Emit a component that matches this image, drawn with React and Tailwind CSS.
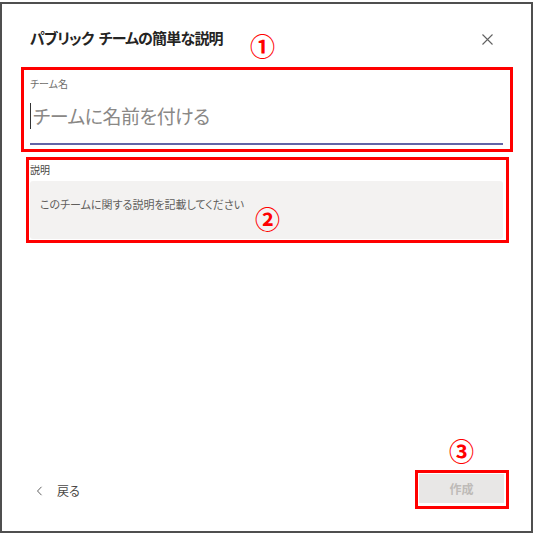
import React from 'react';

const jp = "font-['Noto_Sans_CJK_JP','Noto_Sans',sans-serif] [font-feature-settings:'palt']";

const Marker = ({ n, className }) => (
  <span
    className={`absolute text-[25px] leading-none font-bold text-[#ff0000] font-['Noto_Sans_CJK_JP',sans-serif] ${className}`}
  >
    {n}
  </span>
);

const App = () => {
  return (
    <div className={`relative w-[533px] h-[533px] bg-white pt-[2px] ${jp}`}>
      <div className="w-full h-[531px] border-2 border-[#4f4f4f] flex flex-col">
        {/* header */}
        <div className="flex justify-between items-center pl-[28px] pr-[38px] pt-[22px]">
          <h1 className="text-[15px] leading-[24px] font-bold tracking-[-0.8px] text-[#252423]">
            <span className="mr-[5px]">パブリック</span>
            <span>チームの簡単な説明</span>
          </h1>
          <svg width="11" height="11" viewBox="0 0 11 11" className="mt-[2px]">
            <path d="M0.5 0.5 L10.5 10.5 M10.5 0.5 L0.5 10.5" stroke="#616161" strokeWidth="1.1" />
          </svg>
        </div>

        {/* team name */}
        <div className="ml-[19px] w-[492px] mt-[17px] border-[3px] border-[#ff0000] pl-[6px] pr-[7px] pt-[7px] pb-[4px]">
          <div className="text-[10px] leading-[14px] text-[#6e6c6a]">チーム名</div>
          <div className="flex items-center h-[54px] border-b-2 border-[#6264a7] pb-[2px]">
            <span className="w-px h-[26px] bg-[#333]" />
            <span className="text-[19px] leading-[28px] tracking-[-0.5px] text-[#8a8886] ml-[2px]">
              チームに名前を付ける
            </span>
          </div>
        </div>

        {/* description */}
        <div className="ml-[24px] w-[483px] mt-[5px] border-[3px] border-[#ff0000] pl-px pr-[3px] pt-px pb-px">
          <div className="text-[10px] leading-[14px] text-[#484644] h-[20px] pt-[2px]">説明</div>
          <div className="h-[58px] bg-[#f3f2f1] rounded-[3px] pl-[10px] pt-[9px]">
            <span className="text-[11px] leading-[14px] text-[#605e5c]">
              このチームに関する説明を記載してください
            </span>
          </div>
        </div>

        <div className="flex-1" />

        {/* footer */}
        <div className="flex justify-between items-center pl-[34px] pr-[22px] pb-[20px]">
          <div className="flex items-center gap-[14px] text-[12px] text-[#484644]">
            <svg width="7" height="10" viewBox="0 0 7 10">
              <path d="M5.5 0.8 L1.5 5 L5.5 9.2" fill="none" stroke="#616161" strokeWidth="1" />
            </svg>
            <span>戻る</span>
          </div>
          <div className="border-[3px] border-[#ff0000] pl-px pr-[2px] pt-px pb-[3px] mb-[2px]">
            <div className="w-[85px] h-[29px] bg-[#e8e7e6] flex items-center justify-center text-[12px] font-bold text-[#bebbb8]">
              作成
            </div>
          </div>
        </div>
      </div>

      <Marker n="①" className="left-[250px] top-[33px]" />
      <Marker n="②" className="left-[255px] top-[206px]" />
      <Marker n="③" className="left-[449px] top-[438px]" />
    </div>
  );
};

export default App;
